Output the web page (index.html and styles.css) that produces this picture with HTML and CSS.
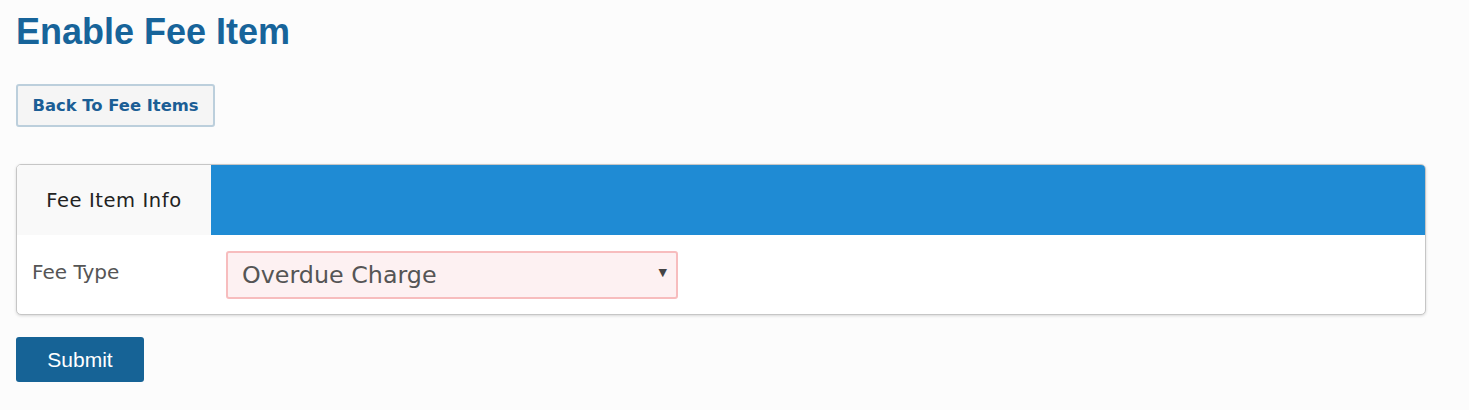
FILE: index.html
```html
<!DOCTYPE html>
<html>
<head>
<meta charset="utf-8">
<link rel="stylesheet" href="styles.css">
</head>
<body>
<div class="page">
  <h1 class="title">Enable Fee Item</h1>
  <div class="actions">
    <button class="btn-back" type="button">Back To Fee Items</button>
  </div>
  <div class="panel">
    <div class="tabs">
      <div class="tab active">Fee Item Info</div>
      <div class="tab-fill"></div>
    </div>
    <div class="panel-body">
      <label class="field-label">Fee Type</label>
      <div class="select">
        <span class="select-value">Overdue Charge</span>
        <span class="select-arrow">&#9660;</span>
      </div>
    </div>
  </div>
  <button class="btn-submit" type="button">Submit</button>
</div>
</body>
</html>
```
FILE: styles.css
```css
html, body {
  margin: 0;
  padding: 0;
  background: #fcfcfc;
}
.page {
  padding: 12px 16px 0 16px;
  width: 1410px;
}
.title {
  margin: 0;
  font-family: "Liberation Sans", Arial, sans-serif;
  font-weight: bold;
  font-size: 36px;
  line-height: 40px;
  color: #17649a;
}
.actions {
  margin-top: 32px;
}
.btn-back {
  display: block;
  width: 199px;
  height: 43px;
  box-sizing: border-box;
  border: 2px solid #bccfdc;
  border-radius: 3px;
  background: #f5f5f5;
  font-family: "DejaVu Sans", Verdana, sans-serif;
  font-weight: bold;
  font-size: 16.4px;
  color: #1b5e95;
  padding: 0;
  text-align: center;
}
.panel {
  margin-top: 37px;
  border: 1px solid #c6c6c6;
  border-radius: 5px;
  box-shadow: 0 1px 3px rgba(0,0,0,0.15);
  background: #ffffff;
  overflow: hidden;
}
.tabs {
  display: flex;
  height: 70px;
}
.tab {
  width: 194px;
  display: flex;
  align-items: center;
  justify-content: center;
  background: #f9f9f9;
  font-family: "DejaVu Sans", Verdana, sans-serif;
  font-size: 19.5px;
  letter-spacing: 0.6px;
  color: #222;
}
.tab-fill {
  flex: 1;
  background: #1f8bd4;
}
.panel-body {
  display: flex;
  align-items: center;
  height: 79px;
  padding-left: 15px;
}
.field-label {
  width: 194px;
  font-family: "DejaVu Sans", Verdana, sans-serif;
  font-size: 20px;
  color: #555;
  margin-top: -5px;
}
.select {
  width: 452px;
  height: 48px;
  box-sizing: border-box;
  border: 2px solid #f7bdbe;
  border-radius: 3px;
  background: #fdf1f2;
  display: flex;
  align-items: center;
  justify-content: space-between;
  padding: 0 9px 0 14px;
}
.select-value {
  font-family: "DejaVu Sans", Verdana, sans-serif;
  font-size: 23.8px;
  color: #555;
}
.select-arrow {
  font-family: "DejaVu Sans", sans-serif;
  font-size: 11px;
  color: #444;
  margin-top: -4px;
}
.btn-submit {
  display: block;
  margin-top: 22px;
  width: 128px;
  height: 45px;
  border: none;
  border-radius: 3px;
  background: #166396;
  color: #ffffff;
  font-family: "Liberation Sans", Arial, sans-serif;
  font-size: 21px;
  padding: 0;
}
```
